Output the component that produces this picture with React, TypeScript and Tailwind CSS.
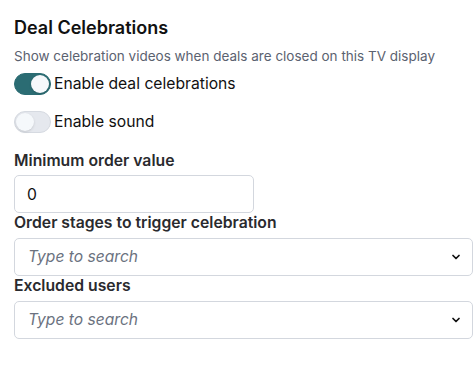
import { useState } from 'react'

function Toggle({ on, onChange, label }: { on: boolean; onChange: (v: boolean) => void; label: string }) {
  return (
    <label className="flex items-center gap-[3px] h-[22px] cursor-pointer">
      <button
        type="button"
        onClick={() => onChange(!on)}
        className={`relative w-[37px] h-[22px] rounded-full border shrink-0 transition-colors ${
          on ? 'bg-[#2b6c73] border-[#2b6c73]' : 'bg-[#e5e8ee] border-[#d6dae1]'
        }`}
      >
        <span
          className={`absolute top-[1px] w-[18px] h-[18px] rounded-full bg-[#f5f8fb] shadow-sm transition-all ${
            on ? 'left-[16px]' : 'left-[1px]'
          }`}
        />
      </button>
      <span className="text-[15.7px] leading-[22px] text-[#111]">{label}</span>
    </label>
  )
}

function SearchSelect({ placeholder }: { placeholder: string }) {
  return (
    <div className="flex items-center h-[38px] w-full rounded-[5px] border border-[#d3d7de] bg-white pl-[13px] pr-[10px]">
      <input
        className="flex-1 bg-transparent outline-none text-[15.6px] italic placeholder:text-[#6b7280] placeholder:italic"
        placeholder={placeholder}
      />
      <svg width="12" height="12" viewBox="0 0 24 24" fill="none" stroke="#111" strokeWidth="3.5" strokeLinecap="round" strokeLinejoin="round">
        <path d="M6 9l6 6 6-6" />
      </svg>
    </div>
  )
}

export default function App() {
  const [celebrate, setCelebrate] = useState(true)
  const [sound, setSound] = useState(false)
  const [minValue, setMinValue] = useState('0')

  return (
    <div className="bg-white w-[476px] h-[368px] pl-[14px] pr-[3px] pt-[16px] font-['Inter',sans-serif] text-[#111]">
      <h2 className="text-[18px] font-semibold leading-[24px]">Deal Celebrations</h2>
      <p className="mt-[7px] text-[13.5px] leading-[18px] text-[#5b6270]">
        Show celebration videos when deals are closed on this TV display
      </p>
      <div className="mt-[8px] flex flex-col gap-[16px]">
        <Toggle on={celebrate} onChange={setCelebrate} label="Enable deal celebrations" />
        <Toggle on={sound} onChange={setSound} label="Enable sound" />
      </div>
      <div className="mt-[18px] text-[15.75px] font-semibold leading-[20px] text-[#2a2a2e]">Minimum order value</div>
      <input
        value={minValue}
        onChange={(e) => setMinValue(e.target.value)}
        className="mt-[4px] block w-[240px] h-[38px] rounded-[5px] border border-[#d3d7de] px-[12px] text-[15.7px] outline-none"
      />
      <div className="text-[15.75px] font-semibold leading-[20px] text-[#2a2a2e]">Order stages to trigger celebration</div>
      <div className="mt-[5px]">
        <SearchSelect placeholder="Type to search" />
      </div>
      <div className="text-[15.75px] font-semibold leading-[20px] text-[#2a2a2e]">Excluded users</div>
      <div className="mt-[5px]">
        <SearchSelect placeholder="Type to search" />
      </div>
    </div>
  )
}
